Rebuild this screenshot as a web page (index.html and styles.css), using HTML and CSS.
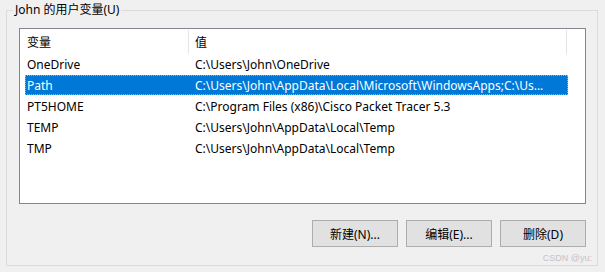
FILE: index.html
```html
<!DOCTYPE html>
<html lang="zh-CN">
<head>
    <meta charset="UTF-8">
    <title>用户变量</title>
    <link rel="stylesheet" href="styles.css">
</head>
<body>
    <div class="group">
        <span class="group-title">John 的用户变量(U)</span>

        <div class="listbox">
            <div class="list-header">
                <div class="hcell name">变量</div>
                <div class="hcell value">值</div>
            </div>
            <div class="row">
                <div class="cell">OneDrive</div>
                <div class="cell">C:\Users\John\OneDrive</div>
            </div>
            <div class="row selected">
                <div class="cell">Path</div>
                <div class="cell">C:\Users\John\AppData\Local\Microsoft\WindowsApps;C:\Us...</div>
            </div>
            <div class="row">
                <div class="cell">PT5HOME</div>
                <div class="cell">C:\Program Files (x86)\Cisco Packet Tracer 5.3</div>
            </div>
            <div class="row">
                <div class="cell">TEMP</div>
                <div class="cell">C:\Users\John\AppData\Local\Temp</div>
            </div>
            <div class="row">
                <div class="cell">TMP</div>
                <div class="cell">C:\Users\John\AppData\Local\Temp</div>
            </div>
        </div>

        <div class="buttons">
            <button>新建(N)...</button>
            <button>编辑(E)...</button>
            <button>删除(D)</button>
        </div>

        <span class="watermark">CSDN @yu:</span>
    </div>
</body>
</html>
```

FILE: styles.css
```css
/* Dialog base */
body {
    margin: 0;
    background-color: #f0f0f0;
    font-family: 'Noto Sans', 'Noto Sans CJK SC', sans-serif;
    font-size: 12px;
    color: #000;
}

/* Group box */
.group {
    position: relative;
    margin: 10px 7px 0 6px;
    height: 256px;
    border: 1px solid #dcdcdc;
    padding: 17px 11px 0 12px;
    box-sizing: border-box;
}

.group-title {
    position: absolute;
    left: 6px;
    top: -9px;
    padding: 0 2px;
    background-color: #f0f0f0;
    line-height: 16px;
}

/* List view */
.listbox {
    height: 176px;
    border: 1px solid #828790;
    background-color: #ffffff;
    box-sizing: border-box;
}

.list-header {
    display: flex;
    height: 25px;
    align-items: stretch;
}

.hcell {
    display: flex;
    align-items: center;
}

.hcell.name {
    width: 168px;
    padding-left: 7px;
    box-sizing: border-box;
}

.hcell.value {
    width: 379px;
    padding-left: 6px;
    margin-top: 1px;
    border-left: 1px solid #e5e5e5;
    border-right: 1px solid #e5e5e5;
    box-sizing: border-box;
}

.row {
    display: grid;
    grid-template-columns: 170px 1fr;
    align-items: center;
    width: 543px;
    height: 21px;
    margin-left: 5px;
    box-sizing: border-box;
}

.cell {
    white-space: nowrap;
}

.cell:first-child {
    padding-left: 2px;
}

.row.selected {
    height: 20px;
    margin-bottom: 1px;
    background-color: #0078d7;
    color: #ffffff;
    outline: 1px dotted #f0a040;
    outline-offset: -1px;
}

/* Buttons */
.buttons {
    display: flex;
    justify-content: flex-end;
    gap: 8px;
    margin-top: 16px;
}

button {
    width: 86px;
    height: 27px;
    font-family: inherit;
    font-size: 12px;
    color: #000;
    background-color: #e1e1e1;
    border: 1px solid #adadad;
    border-radius: 0;
    padding: 0;
}

.watermark {
    position: absolute;
    right: 5px;
    bottom: 2px;
    font-family: 'Liberation Sans', sans-serif;
    font-size: 9px;
    color: #c4c4c4;
}
```
